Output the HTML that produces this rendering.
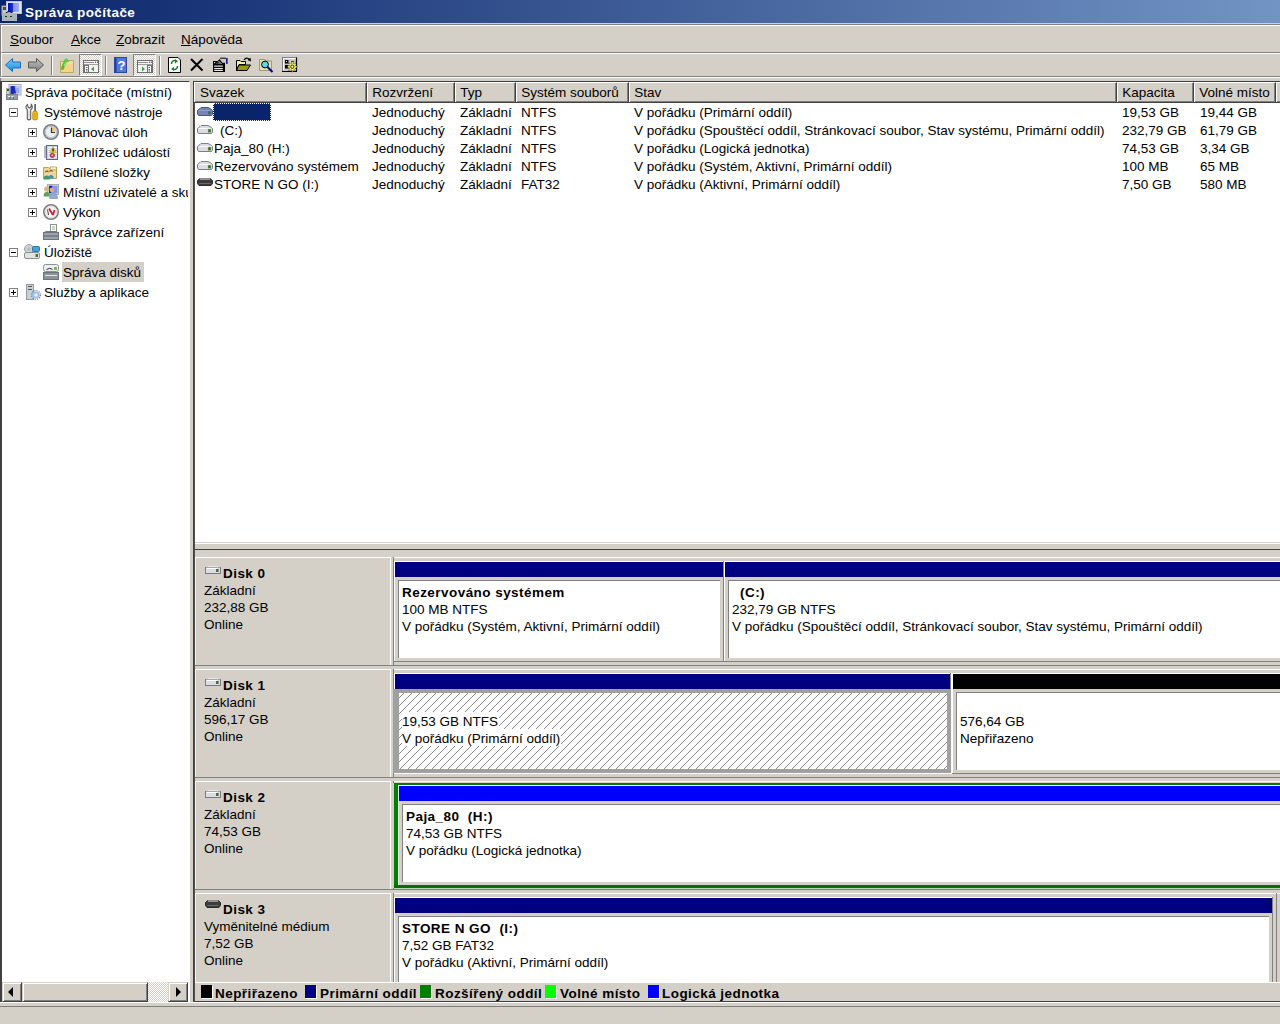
<!DOCTYPE html>
<html><head><meta charset="utf-8">
<style>
*{margin:0;padding:0;box-sizing:border-box}
html,body{width:1280px;height:1024px;overflow:hidden;background:#d4d0c8}
body{position:relative;font-family:"Liberation Sans",sans-serif;font-size:13.5px;color:#000}
.a{position:absolute}
.t{position:absolute;white-space:nowrap;line-height:16px}
.b{font-weight:bold;letter-spacing:0.45px}
.hl{position:absolute;height:1px}
.vl{position:absolute;width:1px}
svg{position:absolute;overflow:visible}
</style></head><body>

<div class="a" style="left:0px;top:0px;width:1280px;height:23px;background:linear-gradient(to right,#0a246a,#7294c4);"></div>
<div class="t b" style="left:25px;top:4.800000000000001px;color:#fff">Správa počítače</div>
<div class="a" style="left:0px;top:23px;width:1280px;height:1px;background:#d4d0c8;"></div>
<div class="a" style="left:0px;top:24px;width:1280px;height:1px;background:#808080;"></div>
<div class="a" style="left:1px;top:25px;width:1279px;height:28px;background:#d4d0c8;border-top:1px solid #fff;border-left:1px solid #fff;border-bottom:1px solid #808080"></div>
<div class="t" style="left:10px;top:31.500000000000004px;"><u>S</u>oubor</div>
<div class="t" style="left:71px;top:31.500000000000004px;"><u>A</u>kce</div>
<div class="t" style="left:116px;top:31.500000000000004px;"><u>Z</u>obrazit</div>
<div class="t" style="left:181px;top:31.500000000000004px;"><u>N</u>ápověda</div>
<div class="a" style="left:1px;top:53px;width:1279px;height:24px;background:#d4d0c8;border-top:1px solid #fff;border-left:1px solid #fff;border-bottom:1px solid #808080"></div>
<div class="a" style="left:0px;top:24px;width:1px;height:60px;background:#808080;"></div>
<div class="a" style="left:0px;top:77px;width:1280px;height:1px;background:#fff;"></div>
<div class="a" style="left:0px;top:81px;width:190px;height:922px;background:#fff;border-top:1px solid #404040;border-left:2px solid #404040;border-right:1px solid #fff;border-bottom:1px solid #fff"></div>
<div class="a" style="left:2px;top:82px;width:186px;height:900px;overflow:hidden">
<div class="t" style="left:23px;top:2.799999999999997px">Správa počítače (místní)</div>
<div class="a" style="left:7px;top:26.0px;width:9px;height:9px;border:1px solid #808080;background:#fff"></div>
<div class="a" style="left:9px;top:30.0px;width:5px;height:1px;background:#000"></div>
<div class="t" style="left:42px;top:22.799999999999997px">Systémové nástroje</div>
<div class="a" style="left:26px;top:46.0px;width:9px;height:9px;border:1px solid #808080;background:#fff"></div>
<div class="a" style="left:28px;top:50.0px;width:5px;height:1px;background:#000"></div>
<div class="a" style="left:30px;top:48.0px;width:1px;height:5px;background:#000"></div>
<div class="t" style="left:61px;top:42.8px">Plánovač úloh</div>
<div class="a" style="left:26px;top:66.0px;width:9px;height:9px;border:1px solid #808080;background:#fff"></div>
<div class="a" style="left:28px;top:70.0px;width:5px;height:1px;background:#000"></div>
<div class="a" style="left:30px;top:68.0px;width:1px;height:5px;background:#000"></div>
<div class="t" style="left:61px;top:62.80000000000001px">Prohlížeč událostí</div>
<div class="a" style="left:26px;top:86.0px;width:9px;height:9px;border:1px solid #808080;background:#fff"></div>
<div class="a" style="left:28px;top:90.0px;width:5px;height:1px;background:#000"></div>
<div class="a" style="left:30px;top:88.0px;width:1px;height:5px;background:#000"></div>
<div class="t" style="left:61px;top:82.80000000000001px">Sdílené složky</div>
<div class="a" style="left:26px;top:106.0px;width:9px;height:9px;border:1px solid #808080;background:#fff"></div>
<div class="a" style="left:28px;top:110.0px;width:5px;height:1px;background:#000"></div>
<div class="a" style="left:30px;top:108.0px;width:1px;height:5px;background:#000"></div>
<div class="t" style="left:61px;top:102.80000000000001px">Místní uživatelé a skupiny</div>
<div class="a" style="left:26px;top:126.0px;width:9px;height:9px;border:1px solid #808080;background:#fff"></div>
<div class="a" style="left:28px;top:130.0px;width:5px;height:1px;background:#000"></div>
<div class="a" style="left:30px;top:128.0px;width:1px;height:5px;background:#000"></div>
<div class="t" style="left:61px;top:122.80000000000001px">Výkon</div>
<div class="t" style="left:61px;top:142.8px">Správce zařízení</div>
<div class="a" style="left:7px;top:166.0px;width:9px;height:9px;border:1px solid #808080;background:#fff"></div>
<div class="a" style="left:9px;top:170.0px;width:5px;height:1px;background:#000"></div>
<div class="t" style="left:42px;top:162.8px">Úložiště</div>
<div class="a" style="left:60px;top:180px;width:82px;height:20px;background:#d4d0c8"></div>
<div class="t" style="left:61px;top:182.8px">Správa disků</div>
<div class="a" style="left:7px;top:206.0px;width:9px;height:9px;border:1px solid #808080;background:#fff"></div>
<div class="a" style="left:9px;top:210.0px;width:5px;height:1px;background:#000"></div>
<div class="a" style="left:11px;top:208.0px;width:1px;height:5px;background:#000"></div>
<div class="t" style="left:42px;top:202.8px">Služby a aplikace</div>
</div>
<div class="a" style="left:148px;top:982px;width:20px;height:20px;background:repeating-conic-gradient(#d4d0c8 0% 25%,#fff 0% 50%) 0 0/2px 2px;"></div>
<div class="a" style="left:2px;top:982px;width:20px;height:20px;background:#d4d0c8;border-top:1px solid #d4d0c8;border-left:1px solid #d4d0c8;border-right:1px solid #404040;border-bottom:1px solid #404040;box-shadow:inset 1px 1px 0 #fff,inset -1px -1px 0 #808080"></div>
<div class="a" style="left:22px;top:982px;width:126px;height:20px;background:#d4d0c8;border-top:1px solid #d4d0c8;border-left:1px solid #d4d0c8;border-right:1px solid #404040;border-bottom:1px solid #404040;box-shadow:inset 1px 1px 0 #fff,inset -1px -1px 0 #808080"></div>
<div class="a" style="left:168px;top:982px;width:20px;height:20px;background:#d4d0c8;border-top:1px solid #d4d0c8;border-left:1px solid #d4d0c8;border-right:1px solid #404040;border-bottom:1px solid #404040;box-shadow:inset 1px 1px 0 #fff,inset -1px -1px 0 #808080"></div>
<svg style="left:8px;top:987px" width="6" height="10"><path d="M5 0V10L0 5Z" fill="#000"/></svg>
<svg style="left:176px;top:987px" width="6" height="10"><path d="M0 0V10L5 5Z" fill="#000"/></svg>
<div class="a" style="left:193px;top:81px;width:1px;height:921px;background:#404040;"></div>
<div class="a" style="left:193px;top:81px;width:1087px;height:1px;background:#404040;"></div>
<div class="a" style="left:194px;top:82px;width:1086px;height:21px;background:#d4d0c8;border-bottom:1px solid #404040"></div>
<div class="a" style="left:194px;top:82px;width:173px;height:20px;border-top:1px solid #fff;border-left:1px solid #fff;border-right:1px solid #404040;box-shadow:inset -1px -1px 0 #808080"></div>
<div class="t" style="left:200px;top:85.3px;">Svazek</div>
<div class="a" style="left:367px;top:82px;width:88px;height:20px;border-top:1px solid #fff;border-left:1px solid #fff;border-right:1px solid #404040;box-shadow:inset -1px -1px 0 #808080"></div>
<div class="t" style="left:372.3px;top:85.3px;">Rozvržení</div>
<div class="a" style="left:455px;top:82px;width:61px;height:20px;border-top:1px solid #fff;border-left:1px solid #fff;border-right:1px solid #404040;box-shadow:inset -1px -1px 0 #808080"></div>
<div class="t" style="left:460.3px;top:85.3px;">Typ</div>
<div class="a" style="left:516px;top:82px;width:113px;height:20px;border-top:1px solid #fff;border-left:1px solid #fff;border-right:1px solid #404040;box-shadow:inset -1px -1px 0 #808080"></div>
<div class="t" style="left:521.3px;top:85.3px;">Systém souborů</div>
<div class="a" style="left:629px;top:82px;width:488px;height:20px;border-top:1px solid #fff;border-left:1px solid #fff;border-right:1px solid #404040;box-shadow:inset -1px -1px 0 #808080"></div>
<div class="t" style="left:634.3px;top:85.3px;">Stav</div>
<div class="a" style="left:1117px;top:82px;width:77px;height:20px;border-top:1px solid #fff;border-left:1px solid #fff;border-right:1px solid #404040;box-shadow:inset -1px -1px 0 #808080"></div>
<div class="t" style="left:1122.3px;top:85.3px;">Kapacita</div>
<div class="a" style="left:1194px;top:82px;width:82px;height:20px;border-top:1px solid #fff;border-left:1px solid #fff;border-right:1px solid #404040;box-shadow:inset -1px -1px 0 #808080"></div>
<div class="t" style="left:1199.3px;top:85.3px;">Volné místo</div>
<div class="a" style="left:1276px;top:82px;width:15px;height:20px;border-top:1px solid #fff;border-left:1px solid #fff;border-right:1px solid #404040;box-shadow:inset -1px -1px 0 #808080"></div>
<div class="a" style="left:194px;top:103px;width:1086px;height:439px;background:#fff;"></div>
<div class="a" style="left:213px;top:103px;width:58px;height:18px;background:#0a246a;outline:1px dotted #fff;outline-offset:-1px"></div>
<div class="t" style="left:372px;top:104.8px;">Jednoduchý</div>
<div class="t" style="left:460px;top:104.8px;">Základní</div>
<div class="t" style="left:521px;top:104.8px;">NTFS</div>
<div class="t" style="left:634px;top:104.8px;">V pořádku (Primární oddíl)</div>
<div class="t" style="left:1122px;top:104.8px;">19,53 GB</div>
<div class="t" style="left:1200px;top:104.8px;">19,44 GB</div>
<!--icon0-->
<div class="t" style="left:212px;top:122.8px;"><span style="margin-left:8px">(C:)</span></div>
<div class="t" style="left:372px;top:122.8px;">Jednoduchý</div>
<div class="t" style="left:460px;top:122.8px;">Základní</div>
<div class="t" style="left:521px;top:122.8px;">NTFS</div>
<div class="t" style="left:634px;top:122.8px;">V pořádku (Spouštěcí oddíl, Stránkovací soubor, Stav systému, Primární oddíl)</div>
<div class="t" style="left:1122px;top:122.8px;">232,79 GB</div>
<div class="t" style="left:1200px;top:122.8px;">61,79 GB</div>
<!--icon1-->
<div class="t" style="left:214px;top:140.8px;">Paja_80 (H:)</div>
<div class="t" style="left:372px;top:140.8px;">Jednoduchý</div>
<div class="t" style="left:460px;top:140.8px;">Základní</div>
<div class="t" style="left:521px;top:140.8px;">NTFS</div>
<div class="t" style="left:634px;top:140.8px;">V pořádku (Logická jednotka)</div>
<div class="t" style="left:1122px;top:140.8px;">74,53 GB</div>
<div class="t" style="left:1200px;top:140.8px;">3,34 GB</div>
<!--icon2-->
<div class="t" style="left:214px;top:158.8px;">Rezervováno systémem</div>
<div class="t" style="left:372px;top:158.8px;">Jednoduchý</div>
<div class="t" style="left:460px;top:158.8px;">Základní</div>
<div class="t" style="left:521px;top:158.8px;">NTFS</div>
<div class="t" style="left:634px;top:158.8px;">V pořádku (Systém, Aktivní, Primární oddíl)</div>
<div class="t" style="left:1122px;top:158.8px;">100 MB</div>
<div class="t" style="left:1200px;top:158.8px;">65 MB</div>
<!--icon3-->
<div class="t" style="left:214px;top:176.8px;">STORE N GO (I:)</div>
<div class="t" style="left:372px;top:176.8px;">Jednoduchý</div>
<div class="t" style="left:460px;top:176.8px;">Základní</div>
<div class="t" style="left:521px;top:176.8px;">FAT32</div>
<div class="t" style="left:634px;top:176.8px;">V pořádku (Aktivní, Primární oddíl)</div>
<div class="t" style="left:1122px;top:176.8px;">7,50 GB</div>
<div class="t" style="left:1200px;top:176.8px;">580 MB</div>
<!--icon4-->
<div class="a" style="left:194px;top:542px;width:1086px;height:1px;background:#d4d0c8;"></div>
<div class="a" style="left:194px;top:543px;width:1086px;height:1px;background:#fff;"></div>
<div class="a" style="left:194px;top:549px;width:1086px;height:1px;background:#404040;"></div>
<div class="a" style="left:194px;top:550px;width:1086px;height:432px;overflow:hidden">
<div class="a" style="left:0px;top:7px;width:1086px;height:1px;background:#fff;"></div>
<div class="a" style="left:1px;top:7px;width:196px;height:108px;background:#d4d0c8;border-top:1px solid #fff;border-left:1px solid #f4f4f4;border-right:1px solid #fff"></div>
<div class="a" style="left:197px;top:7px;width:2px;height:108px;background:#d4d0c8;"></div>
<div class="a" style="left:199px;top:7px;width:1px;height:108px;background:#808080;"></div>
<div class="a" style="left:0px;top:115px;width:1086px;height:1px;background:#808080;"></div>
<div class="t b" style="left:29px;top:15.8px;">Disk 0</div>
<div class="t" style="left:10px;top:32.8px;">Základní</div>
<div class="t" style="left:10px;top:49.8px;">232,88 GB</div>
<div class="t" style="left:10px;top:66.8px;">Online</div>
<!--dicon0-->
<div class="a" style="left:0px;top:119px;width:1086px;height:1px;background:#fff;"></div>
<div class="a" style="left:1px;top:119px;width:196px;height:108px;background:#d4d0c8;border-top:1px solid #fff;border-left:1px solid #f4f4f4;border-right:1px solid #fff"></div>
<div class="a" style="left:197px;top:119px;width:2px;height:108px;background:#d4d0c8;"></div>
<div class="a" style="left:199px;top:119px;width:1px;height:108px;background:#808080;"></div>
<div class="a" style="left:0px;top:227px;width:1086px;height:1px;background:#808080;"></div>
<div class="t b" style="left:29px;top:127.8px;">Disk 1</div>
<div class="t" style="left:10px;top:144.8px;">Základní</div>
<div class="t" style="left:10px;top:161.8px;">596,17 GB</div>
<div class="t" style="left:10px;top:178.8px;">Online</div>
<!--dicon1-->
<div class="a" style="left:0px;top:231px;width:1086px;height:1px;background:#fff;"></div>
<div class="a" style="left:1px;top:231px;width:196px;height:108px;background:#d4d0c8;border-top:1px solid #fff;border-left:1px solid #f4f4f4;border-right:1px solid #fff"></div>
<div class="a" style="left:197px;top:231px;width:2px;height:108px;background:#d4d0c8;"></div>
<div class="a" style="left:199px;top:231px;width:1px;height:108px;background:#808080;"></div>
<div class="a" style="left:0px;top:339px;width:1086px;height:1px;background:#808080;"></div>
<div class="t b" style="left:29px;top:239.8px;">Disk 2</div>
<div class="t" style="left:10px;top:256.8px;">Základní</div>
<div class="t" style="left:10px;top:273.8px;">74,53 GB</div>
<div class="t" style="left:10px;top:290.8px;">Online</div>
<!--dicon2-->
<div class="a" style="left:0px;top:343px;width:1086px;height:1px;background:#fff;"></div>
<div class="a" style="left:1px;top:343px;width:196px;height:108px;background:#d4d0c8;border-top:1px solid #fff;border-left:1px solid #f4f4f4;border-right:1px solid #fff"></div>
<div class="a" style="left:197px;top:343px;width:2px;height:108px;background:#d4d0c8;"></div>
<div class="a" style="left:199px;top:343px;width:1px;height:108px;background:#808080;"></div>
<div class="a" style="left:0px;top:451px;width:1086px;height:1px;background:#808080;"></div>
<div class="t b" style="left:29px;top:351.8px;">Disk 3</div>
<div class="t" style="left:10px;top:368.8px;">Vyměnitelné médium</div>
<div class="t" style="left:10px;top:385.8px;">7,52 GB</div>
<div class="t" style="left:10px;top:402.8px;">Online</div>
<!--dicon3-->
<div class="a" style="left:200px;top:11px;width:329px;height:1px;background:#fff;"></div>
<div class="a" style="left:200px;top:11px;width:1px;height:101px;background:#fff;"></div>
<div class="a" style="left:201px;top:12px;width:328px;height:15px;background:#000080;"></div>
<div class="a" style="left:529px;top:11px;width:1px;height:101px;background:#808080;"></div>
<div class="a" style="left:204px;top:30px;width:322px;height:78px;background:#fff;border-top:1px solid #808080;border-left:1px solid #808080"></div>
<div class="a" style="left:200px;top:111px;width:330px;height:1px;background:#808080;"></div>
<div class="t b" style="left:208px;top:35.3px;">Rezervováno systémem</div>
<div class="t" style="left:208px;top:52.3px;">100 MB NTFS</div>
<div class="t" style="left:208px;top:69.3px;">V pořádku (Systém, Aktivní, Primární oddíl)</div>
<div class="a" style="left:530px;top:11px;width:566px;height:1px;background:#fff;"></div>
<div class="a" style="left:530px;top:11px;width:1px;height:101px;background:#fff;"></div>
<div class="a" style="left:531px;top:12px;width:565px;height:15px;background:#000080;"></div>
<div class="a" style="left:1096px;top:11px;width:1px;height:101px;background:#808080;"></div>
<div class="a" style="left:534px;top:30px;width:559px;height:78px;background:#fff;border-top:1px solid #808080;border-left:1px solid #808080"></div>
<div class="a" style="left:530px;top:111px;width:567px;height:1px;background:#808080;"></div>
<div class="t b" style="left:538px;top:35.3px;"><span style="margin-left:8px">(C:)</span></div>
<div class="t" style="left:538px;top:52.3px;">232,79 GB NTFS</div>
<div class="t" style="left:538px;top:69.3px;">V pořádku (Spouštěcí oddíl, Stránkovací soubor, Stav systému, Primární oddíl)</div>
<div class="a" style="left:758px;top:123px;width:338px;height:1px;background:#fff;"></div>
<div class="a" style="left:758px;top:123px;width:1px;height:101px;background:#fff;"></div>
<div class="a" style="left:759px;top:124px;width:337px;height:15px;background:#000000;"></div>
<div class="a" style="left:1096px;top:123px;width:1px;height:101px;background:#808080;"></div>
<div class="a" style="left:762px;top:142px;width:331px;height:78px;background:#fff;border-top:1px solid #808080;border-left:1px solid #808080"></div>
<div class="a" style="left:758px;top:223px;width:339px;height:1px;background:#808080;"></div>
<div class="t" style="left:766px;top:164.3px;">576,64 GB</div>
<div class="t" style="left:766px;top:181.3px;">Nepřiřazeno</div>
<div class="a" style="left:200px;top:123px;width:557px;height:1px;background:#fff;"></div>
<div class="a" style="left:200px;top:123px;width:1px;height:16px;background:#fff;"></div>
<div class="a" style="left:757px;top:123px;width:1px;height:101px;background:#fff;"></div>
<div class="a" style="left:201px;top:124px;width:555px;height:15px;background:#000080;"></div>
<div class="a" style="left:756px;top:123px;width:1px;height:16px;background:#808080;"></div>
<div class="a" style="left:199px;top:139px;width:558px;height:84px;background:#a0a0a0;"></div>
<div class="a" style="left:205px;top:143px;width:548px;height:76px;background:#fff;"></div>
<svg style="left:205px;top:143px" width="548" height="76" shape-rendering="crispEdges"><defs><pattern id="hp" width="8" height="8" patternUnits="userSpaceOnUse" x="5" y="0"><rect x="0" y="7" width="1" height="1" fill="#8a8a8a"/><rect x="1" y="6" width="1" height="1" fill="#8a8a8a"/><rect x="2" y="5" width="1" height="1" fill="#8a8a8a"/><rect x="3" y="4" width="1" height="1" fill="#8a8a8a"/><rect x="4" y="3" width="1" height="1" fill="#8a8a8a"/><rect x="5" y="2" width="1" height="1" fill="#8a8a8a"/><rect x="6" y="1" width="1" height="1" fill="#8a8a8a"/><rect x="7" y="0" width="1" height="1" fill="#8a8a8a"/></pattern></defs><rect width="548" height="76" fill="url(#hp)"/></svg>
<div class="a" style="left:200px;top:223px;width:558px;height:1px;background:#fff;"></div>
<div class="t" style="left:208px;top:162px;height:17px;padding-top:2.3px;padding-right:1px;background:#fff">19,53 GB NTFS</div>
<div class="t" style="left:208px;top:179px;height:17px;padding-top:2.3px;padding-right:1px;background:#fff">V pořádku (Primární oddíl)</div>
<div class="a" style="left:199px;top:233px;width:1px;height:105px;background:#d4d0c8;"></div>
<div class="a" style="left:200px;top:233px;width:900px;height:2px;background:#087808;"></div>
<div class="a" style="left:200px;top:233px;width:4px;height:105px;background:#008000;"></div>
<div class="a" style="left:200px;top:335px;width:900px;height:3px;background:#007000;"></div>
<div class="a" style="left:200px;top:338px;width:900px;height:1px;background:#b8d8b0;"></div>
<div class="a" style="left:204px;top:235px;width:890px;height:1px;background:#f0fff0;"></div>
<div class="a" style="left:204px;top:235px;width:1px;height:100px;background:#f0fff0;"></div>
<div class="a" style="left:205px;top:236px;width:890px;height:15px;background:#0000ff;"></div>
<div class="a" style="left:208px;top:254px;width:890px;height:78px;background:#fff;border-top:1px solid #808080;border-left:1px solid #808080"></div>
<div class="t b" style="left:212px;top:259.3px;">Paja_80&nbsp; (H:)</div>
<div class="t" style="left:212px;top:276.3px;">74,53 GB NTFS</div>
<div class="t" style="left:212px;top:293.3px;">V pořádku (Logická jednotka)</div>
<div class="a" style="left:200px;top:347px;width:878px;height:1px;background:#fff;"></div>
<div class="a" style="left:200px;top:347px;width:1px;height:101px;background:#fff;"></div>
<div class="a" style="left:201px;top:348px;width:877px;height:15px;background:#000080;"></div>
<div class="a" style="left:1078px;top:347px;width:1px;height:101px;background:#808080;"></div>
<div class="a" style="left:204px;top:366px;width:871px;height:78px;background:#fff;border-top:1px solid #808080;border-left:1px solid #808080"></div>
<div class="a" style="left:200px;top:447px;width:879px;height:1px;background:#808080;"></div>
<div class="t b" style="left:208px;top:371.3px;">STORE N GO&nbsp; (I:)</div>
<div class="t" style="left:208px;top:388.3px;">7,52 GB FAT32</div>
<div class="t" style="left:208px;top:405.3px;">V pořádku (Aktivní, Primární oddíl)</div>
<div class="a" style="left:1082px;top:343px;width:1px;height:108px;background:#808080;"></div>
</div>
<div class="a" style="left:194px;top:982px;width:1086px;height:20px;background:#d4d0c8;border-top:1px solid #fff;border-bottom:1px solid #404040"></div>
<div class="a" style="left:201px;top:985px;width:11px;height:13px;background:#000;box-shadow:1px 1px 0 #fff"></div>
<div class="t b" style="left:215px;top:985.8px;">Nepřiřazeno</div>
<div class="a" style="left:305px;top:985px;width:11px;height:13px;background:#000080;box-shadow:1px 1px 0 #fff"></div>
<div class="t b" style="left:320px;top:985.8px;">Primární oddíl</div>
<div class="a" style="left:420px;top:985px;width:11px;height:13px;background:#008000;box-shadow:1px 1px 0 #fff"></div>
<div class="t b" style="left:435px;top:985.8px;">Rozšířený oddíl</div>
<div class="a" style="left:545px;top:985px;width:11px;height:13px;background:#00ff00;box-shadow:1px 1px 0 #fff"></div>
<div class="t b" style="left:560px;top:985.8px;">Volné místo</div>
<div class="a" style="left:648px;top:985px;width:11px;height:13px;background:#0000ff;box-shadow:1px 1px 0 #fff"></div>
<div class="t b" style="left:662px;top:985.8px;">Logická jednotka</div>
<div class="a" style="left:0px;top:1002px;width:1280px;height:1px;background:#fff;"></div>
<div class="a" style="left:0px;top:1006px;width:1280px;height:1px;background:#808080;"></div>
<div class="a" style="left:0px;top:1007px;width:1280px;height:17px;background:#d4d0c8;"></div>
<div class="a" style="left:194px;top:103px;width:1px;height:899px;background:#505050;"></div>
<svg style="left:0px;top:0px" width="24" height="22" viewBox="0 0 24 22"><defs><linearGradient id="tscr" x1="0" x2="1"><stop offset="0" stop-color="#0010c0"/><stop offset=".45" stop-color="#2030d0"/><stop offset=".5" stop-color="#8090f0"/><stop offset="1" stop-color="#a0b0f0"/></linearGradient></defs>
<rect x="2" y="6" width="5" height="9" fill="#c0d0b0" stroke="#a0a8a0"/>
<rect x="3" y="7" width="3" height="3" fill="#405040"/>
<rect x="6.5" y="1.5" width="15" height="12" fill="#e0e0f0" stroke="#c0c0d0"/>
<rect x="8" y="3" width="11" height="9" fill="url(#tscr)"/>
<path d="M6 13 Q9 10.5 12.5 13" stroke="#101030" stroke-width="1.2" fill="none"/>
<rect x="2.5" y="13.5" width="14" height="7" fill="#a8b4b4" stroke="#b0b8c0"/>
<path d="M5 16.5h2M10 16.5h2" stroke="#202828" stroke-width="1"/></svg>
<svg style="left:5px;top:84px" width="17" height="16" viewBox="0 0 17 16"><rect x="4" y="0.5" width="12" height="10.5" fill="#e4e4f0" stroke="#a8a8b4"/>
<rect x="5.5" y="2" width="9" height="7.5" fill="#98a8f4"/>
<path d="M5.5 2 H9.5 L11 9.5 H5.5Z" fill="#1828c0"/>
<rect x="11" y="2.5" width="3" height="1.2" fill="#c8d4fc"/>
<rect x="1.5" y="4.5" width="3" height="6" fill="#c8d8b0" stroke="#9ca894" stroke-width=".8"/>
<rect x="2" y="5" width="2" height="2" fill="#404838"/>
<path d="M4.5 11 Q7 8.5 9.5 11" stroke="#202030" stroke-width="1.1" fill="none"/>
<rect x="1.5" y="10.5" width="11" height="5" fill="#98a0a8" stroke="#7c8488"/>
<path d="M3 12.5h2M6.5 12.5h2" stroke="#f0f4f4" stroke-width="1"/>
<path d="M5 13.5v1M8.5 13.5v1" stroke="#303838" stroke-width="1"/></svg>
<svg style="left:22px;top:102px" width="20" height="20" viewBox="0 0 20 20"><path d="M5.5 2.5 C3.5 3.5 3.5 6.5 5.3 7.8 L5.3 17 Q7 18.6 8.7 17 L8.7 7.8 C10.5 6.8 10.8 4 9.3 2.5 L9 5 L7.3 6 L6 5Z" fill="#f4f4f4" stroke="#5c5c5c" stroke-width="1.1"/>
<path d="M7 9 V16" stroke="#c8c8c8" stroke-width="1"/>
<rect x="12.3" y="2" width="1.6" height="7.5" fill="#585858"/>
<path d="M11.3 9.3 H14.8 L15.3 11 V17.3 Q13.1 18.8 10.8 17.3 V11Z" fill="#f0c020" stroke="#b88a00" stroke-width="0.9"/>
<path d="M13 11 V16.5" stroke="#d89800" stroke-width="1"/></svg>
<svg style="left:43px;top:124px" width="16" height="16" viewBox="0 0 16 16"><circle cx="8" cy="8" r="7.2" fill="#dde4f0" stroke="#7c7c80" stroke-width="1.6"/>
<circle cx="8" cy="8" r="5.6" fill="#e8eef8" stroke="#b4b8c0" stroke-width="0.8"/>
<path d="M9 3.2 A4.8 4.8 0 0 1 12.8 7.6 H9Z" fill="#e8c868"/>
<path d="M8.5 3.5V8.5H12" stroke="#383838" stroke-width="1.2" fill="none"/></svg>
<svg style="left:43px;top:144px" width="16" height="16" viewBox="0 0 16 16"><rect x="3.5" y="1.5" width="11" height="14" fill="#c8d4f0" stroke="#56669a"/>
<path d="M5 3.5h9M5 5.5h9M5 7.5h9M5 9.5h9M5 11.5h9M5 13.5h9" stroke="#f4f8ff" stroke-width="0.9"/>
<path d="M1 3h3M1 5h3M1 7h3M1 9h3M1 11h3M1 13h3" stroke="#6c7078" stroke-width="1.1"/>
<path d="M10 2.5 L13.5 8.5 H6.5Z" fill="#e8d040" stroke="#c0a820" stroke-width="0.6"/>
<rect x="9.4" y="4.5" width="1.3" height="3" fill="#181818"/>
<circle cx="9.3" cy="11.3" r="2.6" fill="#c04048"/>
<circle cx="9.3" cy="11.3" r="1" fill="#f0b0b0"/></svg>
<svg style="left:43px;top:165px" width="16" height="16" viewBox="0 0 16 16"><path d="M0.5 2.5 H5.5 L7 4 V2 H13.5 V13.5 H0.5Z" fill="#f0d890" stroke="#b8a060" stroke-width="1"/>
<rect x="8" y="2.5" width="5" height="1.5" fill="#fff4c8"/>
<path d="M7 5 H13" stroke="#c8b070"/>
<circle cx="3.8" cy="8" r="2.1" fill="#f0d0b0"/>
<path d="M1.8 7.5 Q2 5.5 4 5.5 Q5.8 5.6 5.8 7.5 L5 7 Q4 6.5 3 7Z" fill="#6c4c20"/>
<circle cx="8" cy="7.5" r="2" fill="#f0d0b0"/>
<path d="M6 7 Q6.2 5 8 5 Q10 5 10 7 L9.3 6.5 Q8 6 7 6.6Z" fill="#6c4c20"/>
<path d="M0.5 14.5 Q0.5 10.5 3.8 10.5 Q6.8 10.5 6.8 14.5Z" fill="#3c9c5c"/>
<path d="M5.5 13.5 Q5.5 10 8 10 Q10.8 10 10.8 13.5Z" fill="#4890b8"/></svg>
<svg style="left:43px;top:184px" width="16" height="16" viewBox="0 0 16 16"><rect x="4.5" y="0.5" width="11" height="10" fill="#d0d4e4" stroke="#a8acb8"/>
<rect x="6" y="1.8" width="8.5" height="7.5" fill="#8898e8"/>
<path d="M6 1.8 H9.5 L8 9.3 H6Z" fill="#1828b0"/>
<circle cx="3.6" cy="5" r="2.6" fill="#d8b888"/>
<circle cx="9" cy="6" r="2.4" fill="#d8a888"/>
<path d="M0.5 12.5 Q0.5 8 3.6 8 Q6.8 8 6.8 12.5Z" fill="#60a058"/>
<path d="M6.5 14.5 Q6.5 9.5 10.5 9.5 Q14.5 9.5 14.5 14.5Z" fill="#90acd0" stroke="#7088a8" stroke-width=".6"/></svg>
<svg style="left:43px;top:204px" width="16" height="16" viewBox="0 0 16 16"><circle cx="8" cy="8" r="7.2" fill="#fff" stroke="#7c7c7c" stroke-width="1.6"/>
<circle cx="8" cy="8" r="5.5" fill="#f8f8f8" stroke="#c8c8c8" stroke-width="0.6"/>
<path d="M4.5 5.5 L5.5 11" stroke="#404040" stroke-width="1"/>
<path d="M6 4.5 L10 11 M10 11 L11.5 6" stroke="#d02030" stroke-width="1.8" fill="none"/></svg>
<svg style="left:43px;top:224px" width="16" height="16" viewBox="0 0 16 16"><rect x="7.5" y="0.5" width="6" height="8" fill="#f8f8f0" stroke="#909090"/>
<rect x="9" y="2" width="3" height="4" fill="#d0d8c0"/>
<path d="M1 9 Q1 7 4 7 H12 Q15 7 15 9Z" fill="#707880"/>
<rect x="0.5" y="8.5" width="15" height="7" fill="#9ca4ac" stroke="#6c747c"/>
<path d="M1 12h14" stroke="#586068" stroke-width="1"/></svg>
<svg style="left:24px;top:244px" width="16" height="16" viewBox="0 0 16 16"><circle cx="5" cy="5" r="4.5" fill="#d0d0d4" stroke="#a0a0a8"/>
<circle cx="5" cy="5" r="1.1" fill="#fff" stroke="#808080" stroke-width=".6"/>
<rect x="8.5" y="2.5" width="7" height="5" rx="1" fill="#48a0d8" stroke="#2878b0"/>
<rect x="0.5" y="8.5" width="15" height="6" rx="1.5" fill="#e0e4e0" stroke="#8c9090"/>
<rect x="11.5" y="10" width="2.5" height="3" fill="#506840"/></svg>
<svg style="left:43px;top:264px" width="16" height="16" viewBox="0 0 16 16"><rect x="0.5" y="0.5" width="15" height="7" rx="2" fill="#eceff0" stroke="#8c9094"/>
<rect x="11" y="3" width="3" height="3" fill="#80b060"/>
<path d="M3.5 5.5 Q7 3 9.5 5.5" stroke="#303030" fill="none"/>
<rect x="0.5" y="8.5" width="15" height="7" fill="#8c9498" stroke="#6c7478"/>
<path d="M2 11.5h12" stroke="#e0e4e8" stroke-width="1"/></svg>
<svg style="left:25px;top:284px" width="16" height="16" viewBox="0 0 16 16"><rect x="1.5" y="0.5" width="7" height="15" fill="#c8d0d4" stroke="#9098a0"/>
<path d="M3 2.5h4M3 5.5h4" stroke="#505860" stroke-width="1"/>
<circle cx="11" cy="11" r="3.6" fill="#a8c0e8"/>
<circle cx="11" cy="11" r="4.4" fill="none" stroke="#7090c8" stroke-width="1.4" stroke-dasharray="1.2 1.1"/>
<circle cx="11" cy="11" r="1.6" fill="#f0f4fc"/></svg>
<svg style="left:5px;top:58px" width="16" height="14" viewBox="0 0 16 14"><defs><linearGradient id="bkg" x1="0" y1="0" x2="0" y2="1"><stop offset="0" stop-color="#78d0fc"/><stop offset="1" stop-color="#1888e0"/></linearGradient></defs>
<path d="M0.5 7 L7.5 0.5 V4 H15.5 V10 H7.5 V13.5Z" fill="url(#bkg)" stroke="#1c6cb8" stroke-width="1" stroke-linejoin="miter"/></svg>
<svg style="left:28px;top:58px" width="16" height="14" viewBox="0 0 16 14"><defs><linearGradient id="fwg" x1="0" y1="0" x2="0" y2="1"><stop offset="0" stop-color="#c0c0c0"/><stop offset="1" stop-color="#808080"/></linearGradient></defs>
<path d="M15.5 7 L8.5 0.5 V4 H0.5 V10 H8.5 V13.5Z" fill="url(#fwg)" stroke="#585858" stroke-width="1"/></svg>
<div class="a" style="left:51px;top:56px;width:1px;height:19px;background:#808080"></div><div class="a" style="left:52px;top:56px;width:1px;height:19px;background:#fff"></div>
<svg style="left:57px;top:55px" width="20" height="20" viewBox="0 0 20 20"><path d="M3.5 6.5 H9 L10 5.5 H16.5 V17.5 H3.5Z" fill="#f0e0a0" stroke="#c0a860" stroke-width="1"/>
<rect x="4" y="9" width="12" height="8" fill="#f4d488"/>
<path d="M5.5 13.5 Q6.5 9.5 8.8 6" stroke="#58b838" stroke-width="3" fill="none" stroke-linecap="round"/>
<path d="M6.5 5.5 L9.5 3 L12.5 6.5 L9.5 7.5Z" fill="#68c848"/>
<path d="M7 11 Q7.8 8.5 9 7" stroke="#a0f080" stroke-width="1" fill="none"/></svg>
<div class="a" style="left:79px;top:54px;width:23px;height:22px;border-top:1px solid #808080;border-left:1px solid #808080;border-right:1px solid #fff;border-bottom:1px solid #fff;background:repeating-conic-gradient(#d4d0c8 0% 25%,#fff 0% 50%) 0 0/2px 2px"></div>
<svg style="left:83px;top:60px" width="16" height="13" viewBox="0 0 16 13"><rect x="0.5" y="0.5" width="15" height="12" fill="#f4f4f4" stroke="#707070"/>
<path d="M1 2.5h10" stroke="#909090" stroke-width="1"/>
<rect x="12" y="1.5" width="1.2" height="1.5" fill="#707070"/><rect x="14" y="1.5" width="1" height="1.5" fill="#707070"/>
<path d="M1 4.5h14" stroke="#a0a0a0"/>
<rect x="1.5" y="5.5" width="4" height="7" fill="#fff" stroke="#707070"/>
<path d="M3 7.5h1.5M3 9.5h1.5M3 11h1.5" stroke="#506070"/>
<path d="M11 6.5 L8 9 L11 11.5Z" fill="#40a040"/></svg>
<div class="a" style="left:105px;top:56px;width:1px;height:19px;background:#808080"></div><div class="a" style="left:106px;top:56px;width:1px;height:19px;background:#fff"></div>
<svg style="left:114px;top:57px" width="13" height="16" viewBox="0 0 13 16"><rect x="0" y="0" width="13" height="16" fill="#5078d8"/>
<rect x="0" y="0" width="2.5" height="16" fill="#2040a0"/>
<rect x="0.5" y="0.5" width="12" height="15" fill="none" stroke="#2848a8"/>
<text x="7.5" y="13" font-family="Liberation Sans" font-weight="bold" font-size="13" fill="#fff" text-anchor="middle">?</text></svg>
<div class="a" style="left:133px;top:54px;width:23px;height:22px;border-top:1px solid #808080;border-left:1px solid #808080;border-right:1px solid #fff;border-bottom:1px solid #fff;background:repeating-conic-gradient(#d4d0c8 0% 25%,#fff 0% 50%) 0 0/2px 2px"></div>
<svg style="left:137px;top:60px" width="16" height="13" viewBox="0 0 16 13"><rect x="0.5" y="0.5" width="15" height="12" fill="#f4f4f4" stroke="#707070"/>
<path d="M1 2.5h10" stroke="#909090" stroke-width="1"/>
<rect x="12" y="1.5" width="1.2" height="1.5" fill="#707070"/><rect x="14" y="1.5" width="1" height="1.5" fill="#707070"/>
<path d="M1 4.5h14" stroke="#a0a0a0"/>
<rect x="10.5" y="5.5" width="4" height="7" fill="#fff" stroke="#707070"/>
<path d="M11.5 7.5h1.5M11.5 9.5h1.5M11.5 11h1.5" stroke="#506070"/>
<path d="M5 6.5 L8 9 L5 11.5Z" fill="#40a040"/></svg>
<div class="a" style="left:159px;top:56px;width:1px;height:19px;background:#808080"></div><div class="a" style="left:160px;top:56px;width:1px;height:19px;background:#fff"></div>
<svg style="left:168px;top:57px" width="13" height="16" viewBox="0 0 13 16"><path d="M0.5 0.5 H10 L12.5 3 V15.5 H0.5Z" fill="#fff" stroke="#000"/>
<path d="M3.5 7 A3 3 0 0 1 8 4" stroke="#108020" stroke-width="1.4" fill="none"/>
<path d="M7 2 L10 4.2 L7 6.5Z" fill="#108020"/>
<path d="M9.5 9 A3 3 0 0 1 5 12" stroke="#108020" stroke-width="1.4" fill="none"/>
<path d="M6 10 L3 12 L6 14Z" fill="#108020"/></svg>
<svg style="left:190px;top:58px" width="14" height="14" viewBox="0 0 14 14"><path d="M1 1 L12.5 12.5 M12.5 1 L1 12.5" stroke="#000" stroke-width="2"/></svg>
<svg style="left:210px;top:55px" width="22" height="20" viewBox="0 0 22 20"><rect x="3" y="6" width="12" height="11" fill="#000"/>
<path d="M4.2 11.1h8.6M4.2 13.6h8.6M4.2 15.5h8.6" stroke="#e8e8e8" stroke-width="1.1"/>
<rect x="4" y="7" width="1.2" height="1.2" fill="#e0e0e0"/>
<rect x="10" y="3.8" width="6" height="4" fill="#c8c8d0"/>
<path d="M10 3.2 H16" stroke="#000" stroke-width="1"/>
<path d="M5.5 8.5 L9.5 4 L13 8.5 L11 10.5 L9 9 L7 10.5Z" fill="#000"/>
<path d="M7 8.5 l1 -1 M8.5 7 l1 -1 M9.5 8 l1 -1 M10.5 9 l1 -1 M8.5 9 l0.8 -0.8" stroke="#fff" stroke-width="0.9"/>
<path d="M16.8 3 V9" stroke="#1c1c80" stroke-width="1.6"/>
<path d="M16 3 L17.5 4.5 M16 9 L17.5 7.5" stroke="#2828a0" stroke-width="1"/></svg>
<svg style="left:235px;top:57px" width="17" height="15" viewBox="0 0 17 15"><path d="M1.5 3.5 H5 L6 4.5 H10.5 V7.5 H4 L1.5 13.5Z" fill="#f8f0a0" stroke="#000" stroke-width="1"/>
<path d="M4 8 H15.5 L12 13.5 H1.5Z" fill="#9c9820" stroke="#000" stroke-width="1"/>
<path d="M9 3 Q11.5 -0.5 14.5 2.5" stroke="#000" stroke-width="1.1" fill="none"/>
<path d="M12.5 3 L16 4.5 L15.5 0.8Z" fill="#000"/></svg>
<svg style="left:259px;top:58px" width="15" height="15" viewBox="0 0 15 15"><path d="M0.5 1.5 H6 L7 3 H12.5 V12.5 H0.5Z" fill="#e8e0b0" stroke="#a09870"/>
<circle cx="6" cy="6.5" r="3.4" fill="#60d8f0" stroke="#000" stroke-width="1"/>
<path d="M8.5 9 L13.5 14" stroke="#000080" stroke-width="2"/></svg>
<svg style="left:278px;top:55px" width="22" height="20" viewBox="0 0 22 20"><rect x="4.5" y="2.5" width="14" height="14" fill="#c8c8c8" stroke="#808080"/>
<path d="M5.5 15.5 V3.5 H18" stroke="#fff" stroke-width="1" fill="none"/>
<path d="M4 16.5 H19 M18.5 2.5 V16.5" stroke="#000" stroke-width="1.2"/>
<rect x="7" y="5" width="3.5" height="3.5" fill="#000"/><rect x="8" y="6" width="1" height="1" fill="#fff"/>
<rect x="7" y="10" width="3.5" height="3.5" fill="#000"/>
<path d="M13 6.8h3" stroke="#000" stroke-width="0.9"/>
<g transform="translate(14.3 11.7)">
<path d="M0 -5.5 L1.2 -3 L3.9 -3.9 L3 -1.2 L5.5 0 L3 1.2 L3.9 3.9 L1.2 3 L0 5.5 L-1.2 3 L-3.9 3.9 L-3 1.2 L-5.5 0 L-3 -1.2 L-3.9 -3.9 L-1.2 -3Z" fill="#e8e850" stroke="#303000" stroke-width="0.7" stroke-dasharray="1 1"/>
<circle r="1.6" fill="#f4f4f4" stroke="#000" stroke-width="0.8"/>
</g></svg>
<svg style="left:197px;top:107px" width="16" height="9" viewBox="0 0 16 9"><path d="M4 0.5 H11 L13 1.5 L14.5 2.5 L15.5 3.5 V7 L14.5 8.5 H1.5 L0.5 7 V3.5 L1.5 2.5 L3 1.5Z" fill="#7484b4" stroke="#4c5880" stroke-width="1"/>
<path d="M2 3.5 H14" stroke="#98a8d0" stroke-width="1" opacity=".8"/>
<rect x="11" y="4" width="3" height="3.5" fill="#3c6068" stroke="#6c8cb0" stroke-width=".5"/></svg>
<svg style="left:197px;top:125px" width="16" height="9" viewBox="0 0 16 9"><path d="M4 0.5 H11 L13 1.5 L14.5 2.5 L15.5 3.5 V7 L14.5 8.5 H1.5 L0.5 7 V3.5 L1.5 2.5 L3 1.5Z" fill="#dcdce4" stroke="#7c8084" stroke-width="1"/>
<path d="M2 3.5 H14" stroke="#ffffff" stroke-width="1" opacity=".8"/>
<rect x="11" y="4" width="3" height="3.5" fill="#3c6038" stroke="#a8d890" stroke-width=".5"/></svg>
<svg style="left:197px;top:143px" width="16" height="9" viewBox="0 0 16 9"><path d="M4 0.5 H11 L13 1.5 L14.5 2.5 L15.5 3.5 V7 L14.5 8.5 H1.5 L0.5 7 V3.5 L1.5 2.5 L3 1.5Z" fill="#dcdce4" stroke="#7c8084" stroke-width="1"/>
<path d="M2 3.5 H14" stroke="#ffffff" stroke-width="1" opacity=".8"/>
<rect x="11" y="4" width="3" height="3.5" fill="#3c6038" stroke="#a8d890" stroke-width=".5"/></svg>
<svg style="left:197px;top:161px" width="16" height="9" viewBox="0 0 16 9"><path d="M4 0.5 H11 L13 1.5 L14.5 2.5 L15.5 3.5 V7 L14.5 8.5 H1.5 L0.5 7 V3.5 L1.5 2.5 L3 1.5Z" fill="#dcdce4" stroke="#7c8084" stroke-width="1"/>
<path d="M2 3.5 H14" stroke="#ffffff" stroke-width="1" opacity=".8"/>
<rect x="11" y="4" width="3" height="3.5" fill="#3c6038" stroke="#a8d890" stroke-width=".5"/></svg>
<svg style="left:197px;top:178px" width="16" height="8" viewBox="0 0 16 8"><path d="M3 0.5 H13 L15.5 2.5 V5.5 L14 7.5 H2 L0.5 5.5 V2.5Z" fill="#3c3c3c" stroke="#2c2c2c"/>
<path d="M3 1 H13" stroke="#d0d0d0" stroke-width="1.2"/>
<path d="M2.5 5.5 H13.5" stroke="#6c6c6c"/></svg>
<svg style="left:205px;top:566px" width="16" height="8" viewBox="0 0 16 8"><rect x="3" y="0" width="10" height="1" fill="#e4e4ec"/>
<rect x="0.5" y="1.5" width="15" height="6" fill="#dcdce6" stroke="#7c7c7c"/>
<path d="M1 1.5 H15" stroke="#a8a8a8"/>
<path d="M2 2.5 H12" stroke="#fff"/>
<rect x="11" y="3" width="2.6" height="3" fill="#4c6c38"/></svg>
<svg style="left:205px;top:678px" width="16" height="8" viewBox="0 0 16 8"><rect x="3" y="0" width="10" height="1" fill="#e4e4ec"/>
<rect x="0.5" y="1.5" width="15" height="6" fill="#dcdce6" stroke="#7c7c7c"/>
<path d="M1 1.5 H15" stroke="#a8a8a8"/>
<path d="M2 2.5 H12" stroke="#fff"/>
<rect x="11" y="3" width="2.6" height="3" fill="#4c6c38"/></svg>
<svg style="left:205px;top:790px" width="16" height="8" viewBox="0 0 16 8"><rect x="3" y="0" width="10" height="1" fill="#e4e4ec"/>
<rect x="0.5" y="1.5" width="15" height="6" fill="#dcdce6" stroke="#7c7c7c"/>
<path d="M1 1.5 H15" stroke="#a8a8a8"/>
<path d="M2 2.5 H12" stroke="#fff"/>
<rect x="11" y="3" width="2.6" height="3" fill="#4c6c38"/></svg>
<svg style="left:205px;top:900px" width="16" height="8" viewBox="0 0 16 8"><path d="M3 0.5 H13 L15.5 2.5 V5.5 L14 7.5 H2 L0.5 5.5 V2.5Z" fill="#3c3c3c" stroke="#2c2c2c"/>
<path d="M3 1 H13" stroke="#d0d0d0" stroke-width="1.2"/>
<path d="M2.5 5.5 H13.5" stroke="#6c6c6c"/></svg>
</body></html>
